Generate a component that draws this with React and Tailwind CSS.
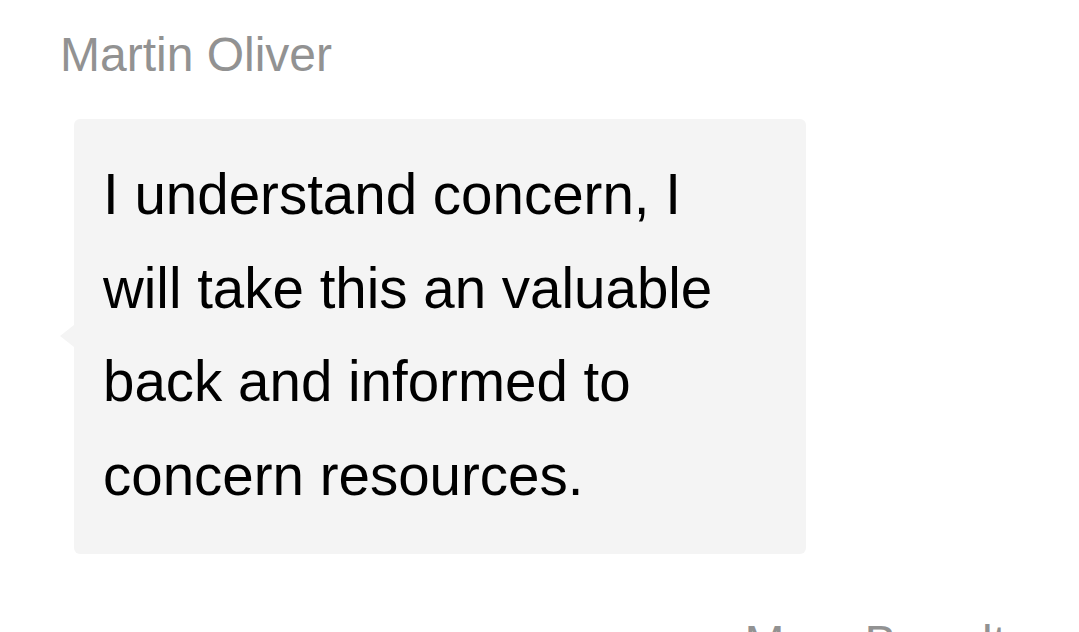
export default function App() {
  return (
    <div className="w-[1079px] h-[632px] overflow-hidden bg-white font-['Liberation_Sans',Arial,sans-serif]">
      <div className="pt-[31px] pl-[60px]">
        <div className="text-[48px] leading-[48px] text-[#929292]">Martin Oliver</div>
      </div>
      <div className="relative mt-[40px] ml-[74px] w-[732px] rounded-[6px] bg-[#f4f4f4] pt-[29px] pb-[32px] pl-[29px] pr-[70px]">
        <span className="absolute left-[-14px] top-[206px] h-0 w-0 border-y-[11px] border-r-[14px] border-y-transparent border-r-[#f4f4f4]" />
        <p className="text-[56.5px] leading-[93.5px] text-black">
          I understand concern, I will take this an valuable back and informed to concern resources.
        </p>
      </div>
      <div className="mt-[65px] flex justify-end pr-[73px]">
        <div className="text-[48px] leading-[48px] text-[#929292]">Mary Brandt</div>
      </div>
    </div>
  )
}
